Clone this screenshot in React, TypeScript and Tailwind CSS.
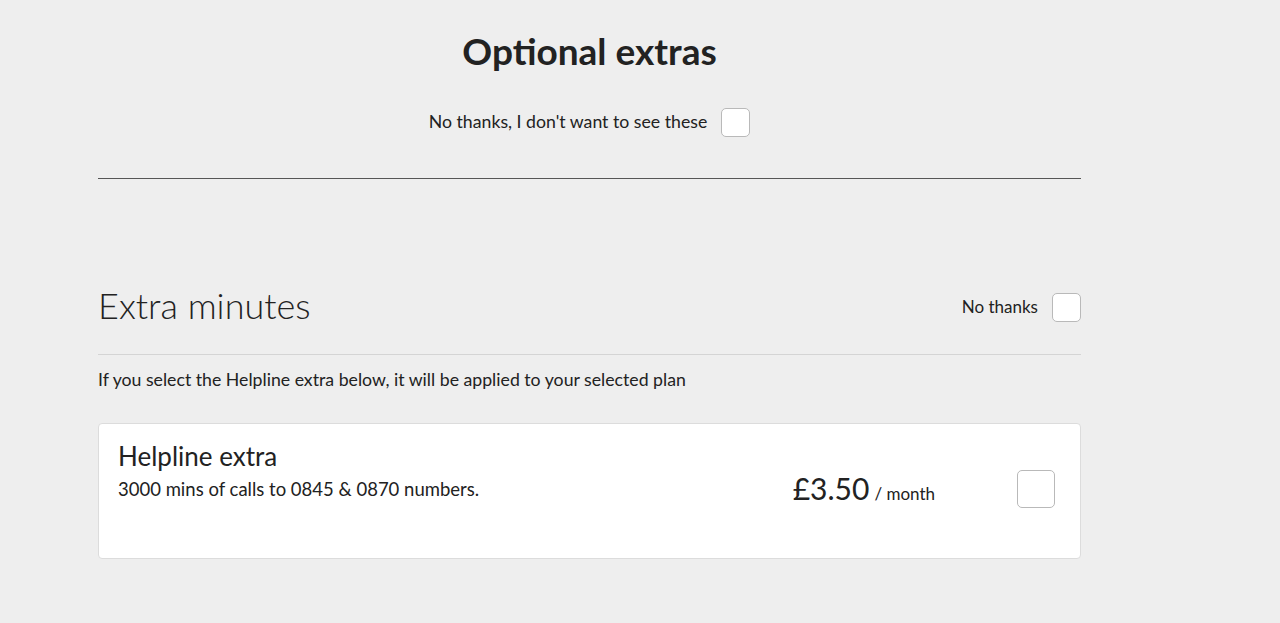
import React from "react";

const font = { fontFamily: "Lato, 'Open Sans', sans-serif" };

function Box({ size = "w-[29px] h-[29px]" }: { size?: string }) {
  return (
    <span
      className={`${size} inline-block shrink-0 rounded-[5px] border border-[#b9b9b9] bg-white`}
    />
  );
}

export default function App() {
  return (
    <div className="min-h-[623px] bg-[#eeeeee] text-[#222222]" style={font}>
      <div className="ml-[98px] w-[983px]">
        {/* Header */}
        <div className="pt-[27px] text-center">
          <h1 className="text-[37px] font-bold leading-[48px] text-[#222222]">
            Optional extras
          </h1>
          <label className="mt-[33px] flex items-center justify-center gap-[14px]">
            <span className="text-[17.7px] text-[#222222]">
              No thanks, I don't want to see these
            </span>
            <Box />
          </label>
        </div>

        <hr className="mt-[41px] border-0 border-t border-[#555555]" />

        {/* Extra minutes */}
        <div className="mt-[104px] flex items-center justify-between">
          <h2 className="mb-[4px] text-[36px] font-light leading-[44px] text-[#222222]">
            Extra minutes
          </h2>
          <label className="flex items-center gap-[14px]">
            <span className="text-[17px]">No thanks</span>
            <Box />
          </label>
        </div>

        <hr className="mt-[23px] border-0 border-t border-[#d4d4d4]" />

        <p className="mt-[13px] text-[17.7px] leading-[24px]">
          If you select the Helpline extra below, it will be applied to your selected plan
        </p>

        {/* Card */}
        <div className="mt-[31px] flex h-[136px] items-start rounded-[4px] border border-[#dcdcdc] bg-white pl-[19px] pr-[25px] pt-[15px]">
          <div className="flex-1">
            <div className="text-[26px] leading-[34px]">Helpline extra</div>
            <div className="mt-[4px] text-[18.5px] leading-[24px]">
              3000 mins of calls to 0845 &amp; 0870 numbers.
            </div>
          </div>
          <div className="mt-[31px] flex items-baseline gap-[5px]">
            <span className="text-[30px] leading-[36px]">£3.50</span>
            <span className="text-[17px]">/ month</span>
          </div>
          <div className="ml-[82px] mt-[31px]">
            <Box size="w-[38px] h-[38px]" />
          </div>
        </div>
      </div>
    </div>
  );
}
